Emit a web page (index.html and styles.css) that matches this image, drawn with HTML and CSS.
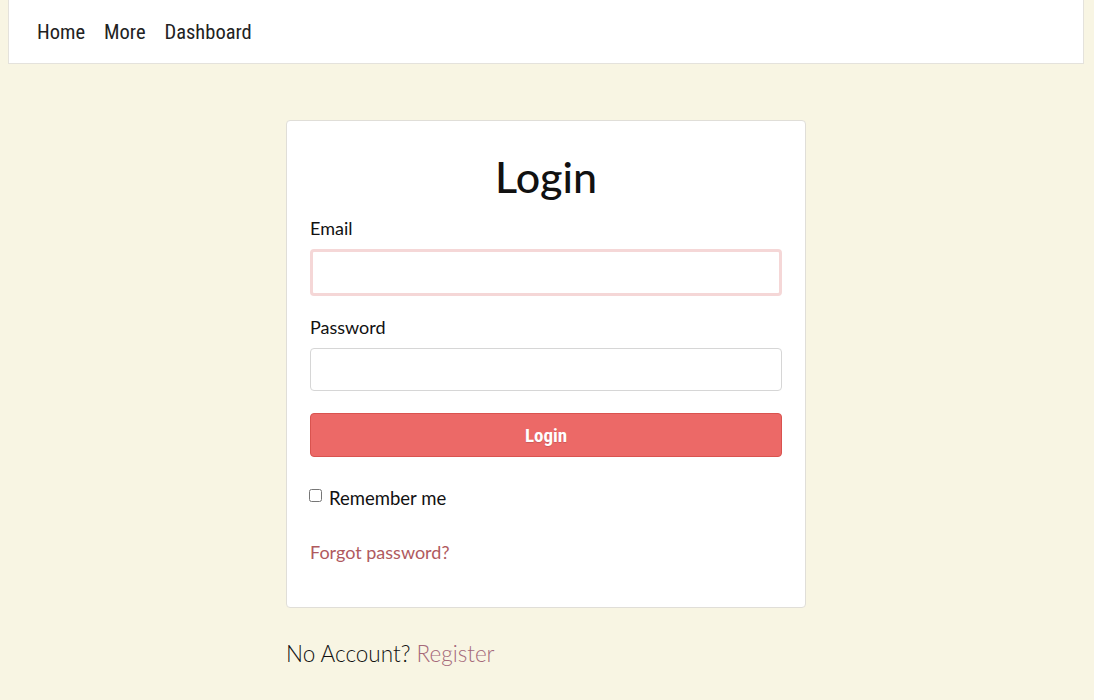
FILE: index.html
```html
<!DOCTYPE html>
<html lang="en">

<head>
    <meta charset="UTF-8">
    <title>Login</title>

    <link rel="stylesheet" href="styles.css">
</head>

<body>
<nav class="navbar">
    <a href="#">Home</a>
    <a href="#">More</a>
    <a href="#">Dashboard</a>
</nav>

<div class="wrapper">
    <div class="card">
        <h1>Login</h1>
        <form>
            <label for="email">Email</label>
            <input type="email" id="email" class="field focused" autofocus>

            <label for="password">Password</label>
            <input type="password" id="password" class="field">

            <button type="button" class="login-button">Login</button>

            <div class="remember">
                <input type="checkbox" id="remember">
                <label for="remember">Remember me</label>
            </div>

            <a href="#" class="forgot">Forgot password?</a>
        </form>
    </div>

    <p class="no-account">No Account? <a href="#">Register</a></p>
</div>
</body>

</html>
```

FILE: styles.css
```css
body {
    margin: 0;
    background-color: #f8f5e3;
    font-family: Lato, "Open Sans", sans-serif;
    color: #111;
}

.navbar {
    display: flex;
    align-items: center;
    gap: 19px;
    height: 63px;
    margin: 0 10px 0 8px;
    padding-left: 28px;
    background-color: #fff;
    border: 1px solid #e4e2dc;
    border-top: none;
}

.navbar a {
    font-family: "Liberation Sans Narrow", "Roboto Condensed", Roboto, sans-serif;
    font-size: 20.5px;
    color: #222;
    text-decoration: none;
}

.wrapper {
    width: 520px;
    margin: 56px 0 0 286px;
}

.card {
    background-color: #fff;
    border: 1px solid #e0ded8;
    border-radius: 4px;
    padding: 24px 23px 44px;
}

h1 {
    text-align: center;
    font-size: 43px;
    font-weight: 500;
    margin: 4px 0 12px;
    line-height: 56px;
}

form label {
    display: block;
    font-size: 18px;
    margin-bottom: 10px;
}

.field {
    display: block;
    box-sizing: border-box;
    width: 100%;
    height: 43px;
    border: 1px solid #d6d6d6;
    border-radius: 4px;
    margin-bottom: 22px;
    padding: 0 18px;
    font-size: 18px;
    outline: none;
}

.field.focused {
    border: 3px solid #f5d7d7;
    height: 47px;
    margin-bottom: 20px;
    caret-color: #333;
}

.login-button {
    display: block;
    width: 100%;
    height: 44px;
    background-color: #ec6967;
    border: 1px solid #d9534f;
    border-radius: 4px;
    color: #fff;
    font-family: "Liberation Sans Narrow", "Roboto Condensed", Roboto, sans-serif;
    font-weight: bold;
    font-size: 19px;
    text-shadow: 0 1px 1px rgba(0, 0, 0, 0.15);
    cursor: pointer;
}

.remember {
    display: flex;
    align-items: center;
    margin-top: 30px;
}

.remember input {
    margin: 0 7px 0 -1px;
    width: 13px;
    height: 13px;
    position: relative;
    top: -3px;
}

.remember label {
    margin: 0;
    font-size: 18.5px;
}

.forgot {
    display: inline-block;
    margin-top: 32px;
    font-size: 18px;
    color: #b05a5e;
    text-decoration: none;
}

.no-account {
    margin: 32px 0 0;
    font-size: 22.5px;
    font-weight: 300;
    color: #111;
}

.no-account a {
    color: #a5697a;
    text-decoration: none;
}
```
